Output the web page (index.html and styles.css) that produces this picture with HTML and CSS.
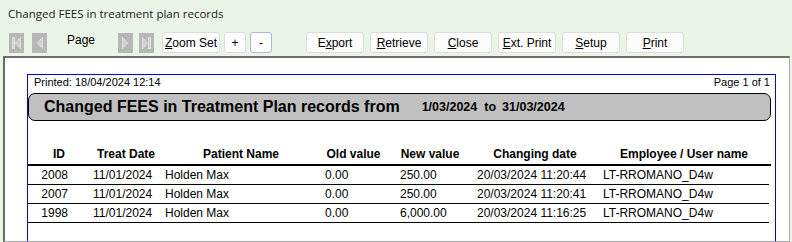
FILE: index.html
```html
<!DOCTYPE html>
<html>
<head>
<meta charset="utf-8">
<link rel="stylesheet" href="styles.css">
</head>
<body>
<div class="window">
  <div class="titlebar">Changed FEES in treatment plan records</div>
  <div class="toolbar">
    <span class="nav nav-first"><svg width="15" height="20" viewBox="0 0 15 20"><rect width="15" height="20" fill="#b7b7b7"/><rect x="3.5" y="4.5" width="2" height="11" fill="#d0d0d0" stroke="#ffffff" stroke-width="1" stroke-dasharray="1 1"/><path d="M11.5 4.5 L6.5 10 L11.5 15.5 Z" fill="#d0d0d0" stroke="#ffffff" stroke-width="1" stroke-dasharray="1 1"/></svg></span>
    <span class="nav nav-prev"><svg width="15" height="20" viewBox="0 0 15 20"><rect width="15" height="20" fill="#b7b7b7"/><path d="M10.5 4.5 L5.5 10 L10.5 15.5 Z" fill="#d0d0d0" stroke="#ffffff" stroke-width="1" stroke-dasharray="1 1"/></svg></span>
    <span class="page-label">Page</span>
    <span class="nav nav-next"><svg width="15" height="20" viewBox="0 0 15 20"><rect width="15" height="20" fill="#b7b7b7"/><path d="M4.5 4.5 L9.5 10 L4.5 15.5 Z" fill="#d0d0d0" stroke="#ffffff" stroke-width="1" stroke-dasharray="1 1"/></svg></span>
    <span class="nav nav-last"><svg width="15" height="20" viewBox="0 0 15 20"><rect width="15" height="20" fill="#b7b7b7"/><path d="M3.5 4.5 L8.5 10 L3.5 15.5 Z" fill="#d0d0d0" stroke="#ffffff" stroke-width="1" stroke-dasharray="1 1"/><rect x="9.5" y="4.5" width="2" height="11" fill="#d0d0d0" stroke="#ffffff" stroke-width="1" stroke-dasharray="1 1"/></svg></span>
    <button class="btn btn-zoom"><u>Z</u>oom Set</button>
    <button class="btn btn-small btn-plus">+</button>
    <button class="btn btn-small btn-minus btn-focus">-</button>
    <button class="btn btn-wide btn-export">E<u>x</u>port</button>
    <button class="btn btn-wide btn-gap"><u>R</u>etrieve</button>
    <button class="btn btn-wide btn-gap"><u>C</u>lose</button>
    <button class="btn btn-wide btn-gap"><u>E</u>xt. Print</button>
    <button class="btn btn-wide btn-gap"><u>S</u>etup</button>
    <button class="btn btn-wide btn-gap"><u>P</u>rint</button>
  </div>
  <div class="preview">
    <div class="page">
      <div class="printed-row">
        <span>Printed: 18/04/2024 12:14</span>
        <span>Page 1 of 1</span>
      </div>
      <div class="band">
        <span class="band-title">Changed FEES in Treatment Plan records from</span>
        <span class="band-date band-from">1/03/2024</span>
        <span class="band-date band-to">to</span>
        <span class="band-date band-end">31/03/2024</span>
      </div>
      <div class="grid head">
        <div class="hc">ID</div>
        <div class="hc">Treat Date</div>
        <div class="hc">Patient Name</div>
        <div class="hc hc-old">Old value</div>
        <div class="hc hc-new">New value</div>
        <div class="hc">Changing date</div>
        <div class="hc">Employee / User name</div>
      </div>
      <div class="grid row">
        <div class="c-id">2008</div><div class="c-date">11/01/2024</div><div class="c-name">Holden Max</div><div class="c-val">0.00</div><div class="c-val">250.00</div><div class="c-val">20/03/2024 11:20:44</div><div class="c-val">LT-RROMANO_D4w</div>
      </div>
      <div class="grid row">
        <div class="c-id">2007</div><div class="c-date">11/01/2024</div><div class="c-name">Holden Max</div><div class="c-val">0.00</div><div class="c-val">250.00</div><div class="c-val">20/03/2024 11:20:41</div><div class="c-val">LT-RROMANO_D4w</div>
      </div>
      <div class="grid row">
        <div class="c-id">1998</div><div class="c-date">11/01/2024</div><div class="c-name">Holden Max</div><div class="c-val">0.00</div><div class="c-val">6,000.00</div><div class="c-val">20/03/2024 11:16:25</div><div class="c-val">LT-RROMANO_D4w</div>
      </div>
    </div>
  </div>
</div>
</body>
</html>
```
FILE: styles.css
```css
* { box-sizing: border-box; }
html, body { margin: 0; padding: 0; }
body {
  width: 792px;
  height: 242px;
  overflow: hidden;
  background: #eaf5e7;
  font-family: "Liberation Sans", Arial, sans-serif;
  color: #000;
}
.window { display: flex; flex-direction: column; height: 242px; }
.titlebar {
  height: 27px;
  padding: 6px 0 0 8px;
  font-family: "Segoe UI", "Open Sans", sans-serif;
  font-size: 11.5px;
  line-height: 15px;
  color: #1a1a1a;
}
.toolbar {
  height: 29px;
  display: flex;
  align-items: flex-start;
  padding: 5px 0 0 9px;
}
.nav { display: block; width: 15px; height: 20px; margin-top: 1px; }
.nav svg { display: block; }
.nav-prev { margin-left: 8px; }
.page-label {
  margin-left: 20px;
  width: 30px;
  font-size: 12px;
  line-height: 15px;
  padding-top: 1px;
  color: #000;
}
.nav-next { margin-left: 21px; }
.nav-last { margin-left: 6px; }
.btn {
  height: 21px;
  border: 1px solid #dcdcdc;
  border-radius: 3px;
  background: #fcfcfc;
  font-family: "Liberation Sans", Arial, sans-serif;
  font-size: 12px;
  color: #000;
  padding: 0;
  line-height: 18px;
}
.btn-zoom { margin-left: 8px; width: 58px; }
.btn-small { width: 22px; margin-left: 4px; }
.btn-focus { border-color: #a4bcd8; }
.btn-wide { width: 58px; }
.btn-export { margin-left: 34px; }
.btn-gap { margin-left: 6px; }
.preview {
  flex: 1;
  margin: 0 2px 0 3px;
  background: #fff;
  border-top: 2px solid #6d6d6d;
  border-left: 2px solid #6d6d6d;
  border-right: 1px solid #a8a8a8;
  border-bottom: 1px solid #a8a8a8;
  padding: 16px 0 0 22px;
  overflow: hidden;
}
.page {
  width: 749px;
  height: 200px;
  border: 1px solid #0000ee;
  padding: 0 4px 0 0;
}
.printed-row {
  height: 18px;
  display: flex;
  justify-content: space-between;
  padding: 0 1px 0 6px;
  font-size: 11px;
  line-height: 14px;
}
.band {
  height: 28px;
  background: #c0c0c0;
  border: 1px solid #000;
  border-radius: 7px;
  display: flex;
  align-items: center;
  padding-left: 15px;
  font-weight: bold;
}
.band-title { font-size: 16px; }
.band-date { font-size: 12.5px; }
.band-from { margin-left: 22px; }
.band-to { margin-left: 7px; }
.band-end { margin-left: 6px; }
.grid {
  display: grid;
  grid-template-columns: 62px 72px 158px 75px 77px 126px 172px;
}
.head {
  height: 45px;
  align-items: end;
  border-bottom: 2px solid #000;
  font-size: 12px;
  font-weight: bold;
  line-height: 14px;
  padding-bottom: 3px;
}
.hc { text-align: center; white-space: nowrap; }
.hc-old { padding-right: 8px; }
.hc-new { padding-right: 7px; }
.row {
  height: 19px;
  width: 741px;
  border-bottom: 1px solid #000;
  font-size: 12px;
  line-height: 18px;
  white-space: nowrap;
}
.c-id { text-align: right; padding-right: 22px; }
.c-date { padding-left: 3px; }
.c-name { padding-left: 3px; }
.c-val { padding-left: 5px; }
```
